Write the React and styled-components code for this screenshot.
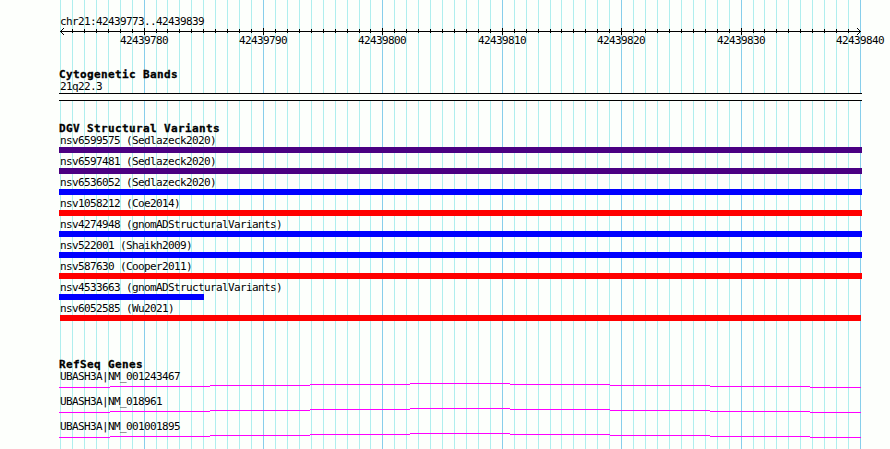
import React from "react";
import styled, { createGlobalStyle } from "styled-components";

const GlobalStyle = createGlobalStyle`
  body {
    margin: 0;
    background: #fdfffc;
    overflow: hidden;
  }
`;

const Browser = styled.main`
  position: relative;
  box-sizing: border-box;
  width: 890px;
  height: 449px;
  padding: 15px 0 0 59px;
  overflow: hidden;
  background: #fdfffc;
  color: #000;
  font: 11px/13px "DejaVu Sans Mono", monospace;
  letter-spacing: -0.622px;
  white-space: pre;
`;

const Grid = styled.svg`
  position: absolute;
  inset: 0;
  width: 890px;
  height: 449px;
`;

const Content = styled.div`
  position: relative;
  display: flex;
  flex-direction: column;
`;

const Label = styled.div`
  height: 13px;
  padding-left: 1px;
`;

const Axis = styled.svg`
  display: block;
  width: 831px;
  height: 20px;
  font: inherit;
`;

const Track = styled.section`
  display: flex;
  flex-direction: column;
  margin-top: ${(p) => p.$gap}px;
`;

const Heading = styled.h2`
  margin: 0;
  height: 12px;
  font: bold 11px/13px "DejaVu Sans Mono", monospace;
  letter-spacing: 0.378px;
  -webkit-text-stroke: 0.3px #000;
`;

const Band = styled.div`
  box-sizing: border-box;
  width: 803px;
  height: 8px;
  border: solid #000;
  border-width: 1px 0;
  background: #fdfffc;
`;

const Rows = styled.div`
  display: flex;
  flex-direction: column;
  gap: ${(p) => p.$gap}px;
`;

const Bar = styled.div`
  height: 6px;
  width: ${(p) => p.$width}px;
  margin-left: ${(p) => p.$start}px;
  background: ${(p) => p.$color};
`;

const Intron = styled.svg`
  display: block;
  width: 803px;
  height: 5px;
`;

const bases = Array.from({ length: 68 }, (_, i) => ({
  x: Math.round((i * 800) / 67),
  major: i % 10 === 7,
  position: 42439773 + i,
}));

const INDIGO = "#4b0082";
const variants = [
  { name: "nsv6599575 (Sedlazeck2020)", color: INDIGO },
  { name: "nsv6597481 (Sedlazeck2020)", color: INDIGO },
  { name: "nsv6536052 (Sedlazeck2020)", color: "#00f" },
  { name: "nsv1058212 (Coe2014)", color: "#f00" },
  { name: "nsv4274948 (gnomADStructuralVariants)", color: "#00f" },
  { name: "nsv522001 (Shaikh2009)", color: "#00f" },
  { name: "nsv587630 (Cooper2011)", color: "#f00" },
  { name: "nsv4533663 (gnomADStructuralVariants)", color: "#00f", width: 145 },
  { name: "nsv6052585 (Wu2021)", color: "#f00", start: 1, width: 801 },
];

const genes = [
  "UBASH3A|NM_001243467",
  "UBASH3A|NM_018961",
  "UBASH3A|NM_001001895",
];

// Each segment is [start, end, row] of the stepped intron line.
const intronSteps = [
  [0, 51, 4],
  [51, 151, 3],
  [151, 251, 2],
  [251, 351, 1],
  [351, 451, 0],
  [451, 551, 1],
  [551, 651, 2],
  [651, 751, 3],
  [751, 802, 4],
];

function GridLines() {
  return (
    <Grid shapeRendering="crispEdges">
      {bases.map(({ x, major, position }) => (
        <rect key={position} x={60 + x} y="0" width="1" height="449" fill={major ? "#87ceeb" : "#afeeee"} />
      ))}
    </Grid>
  );
}

function Ruler() {
  return (
    <Axis>
      <g shapeRendering="crispEdges">
        <rect x="1" y="3" width="801" height="1" />
        {bases.slice(1, -1).map(({ x, major, position }) => (
          <rect key={position} x={x + 1} y={major ? 0 : 1} width="1" height={major ? 7 : 4} />
        ))}
        {[1, 2, 3].map((n) => (
          <React.Fragment key={n}>
            <rect x={1 + n} y={3 - n} width="1" height="1" />
            <rect x={1 + n} y={3 + n} width="1" height="1" />
            <rect x={801 - n} y={3 - n} width="1" height="1" />
            <rect x={801 - n} y={3 + n} width="1" height="1" />
          </React.Fragment>
        ))}
      </g>
      {bases.filter((b) => b.major).map(({ x, position }) => (
        <text key={position} x={x - 23} y="16">{position}</text>
      ))}
    </Axis>
  );
}

export default function App() {
  return (
    <>
      <GlobalStyle />
      <Browser>
        <GridLines />
        <Content>
          <Label>chr21:42439773..42439839</Label>
          <Ruler />
          <Track $gap={20}>
            <Heading>Cytogenetic Bands</Heading>
            <Label>21q22.3</Label>
            <Band />
          </Track>
          <Track $gap={21}>
            <Heading>DGV Structural Variants</Heading>
            <Rows $gap={2}>
              {variants.map(({ name, color, start = 0, width = 803 }) => (
                <div key={name}>
                  <Label>{name}</Label>
                  <Bar $color={color} $start={start} $width={width} />
                </div>
              ))}
            </Rows>
          </Track>
          <Track $gap={37}>
            <Heading>RefSeq Genes</Heading>
            <Rows $gap={7}>
              {genes.map((gene) => (
                <div key={gene}>
                  <Label>{gene}</Label>
                  <Intron shapeRendering="crispEdges">
                    {intronSteps.map(([from, to, row]) => (
                      <rect key={from} x={from} y={row} width={to - from} height="1" fill="#f0f" />
                    ))}
                  </Intron>
                </div>
              ))}
            </Rows>
          </Track>
        </Content>
      </Browser>
    </>
  );
}
